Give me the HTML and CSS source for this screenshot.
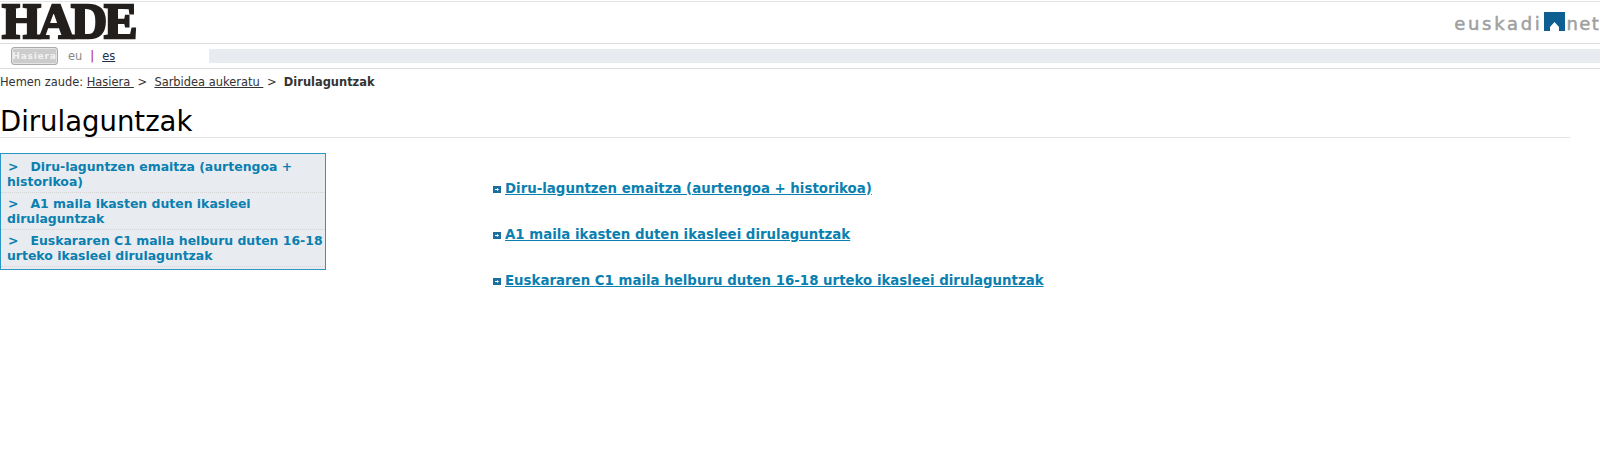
FILE: index.html
```html
<!DOCTYPE html>
<html>
<head>
  <title>Dirulaguntzak</title>
  <link rel="stylesheet" href="styles.css">
</head>
<body>
  <div class="header">
    <div class="logo">HADE</div>
    <div class="euskadi">
      <span>euskadi</span>
      <svg class="euskadi-icon" width="21" height="19" viewBox="0 0 21 19"><path d="M0 0H21V19H15V15L10.500 10L6 15V19H0Z" fill="#0d5f92"/></svg>
      <span class="euskadi-net">net</span>
    </div>
  </div>
  <div class="nav">
    <a class="home-btn" href="#">Hasiera</a>
    <span class="lang">eu</span>
    <span class="lang-sep">|</span>
    <a class="lang-link" href="#">es</a>
    <div class="nav-bar"></div>
  </div>
  <div class="breadcrumb">
    Hemen zaude: <a href="#">Hasiera&nbsp;</a>&nbsp;&gt;&nbsp; <a href="#">Sarbidea aukeratu&nbsp;</a>&nbsp;&gt;&nbsp; <b>Dirulaguntzak</b>
  </div>
  <h1>Dirulaguntzak</h1>
  <div class="main">
    <ul class="side-menu">
      <li><b class="arrow">&gt;</b>Diru-laguntzen emaitza (aurtengoa + historikoa)</li>
      <li><b class="arrow">&gt;</b>A1 maila ikasten duten ikasleei dirulaguntzak</li>
      <li><b class="arrow">&gt;</b>Euskararen C1 maila helburu duten 16-18 urteko ikasleei dirulaguntzak</li>
    </ul>
    <div class="links">
      <div class="link-row">
        <svg class="bullet" width="8" height="7" viewBox="0 0 8 7"><path d="M0 0H8V7H0Z" fill="#1a6f9f"/><path d="M2 3H4V2L6 3.500L4 5V4H2Z" fill="#fff"/></svg>
        <a href="#">Diru-laguntzen emaitza (aurtengoa + historikoa)</a>
      </div>
      <div class="link-row">
        <svg class="bullet" width="8" height="7" viewBox="0 0 8 7"><path d="M0 0H8V7H0Z" fill="#1a6f9f"/><path d="M2 3H4V2L6 3.500L4 5V4H2Z" fill="#fff"/></svg>
        <a href="#">A1 maila ikasten duten ikasleei dirulaguntzak</a>
      </div>
      <div class="link-row">
        <svg class="bullet" width="8" height="7" viewBox="0 0 8 7"><path d="M0 0H8V7H0Z" fill="#1a6f9f"/><path d="M2 3H4V2L6 3.500L4 5V4H2Z" fill="#fff"/></svg>
        <a href="#">Euskararen C1 maila helburu duten 16-18 urteko ikasleei dirulaguntzak</a>
      </div>
    </div>
  </div>
</body>
</html>
```

FILE: styles.css
```css
body {
  margin: 0;
  background-color: #fff;
  font-family: "DejaVu Sans", Verdana, sans-serif;
  font-size: 11.450px;
  color: #333;
}

.header {
  display: flex;
  justify-content: space-between;
  height: 41px;
  border-top: 1px solid #e4e4e4;
  border-bottom: 1px solid #ddd;
  margin-top: 1px;
}

.logo {
  font-family: "Liberation Serif", serif;
  font-weight: bold;
  font-size: 50px;
  line-height: 39px;
  letter-spacing: -3px;
  color: #231f1c;
  -webkit-text-stroke: 2.500px #231f1c;
  padding-left: 2px;
}

.euskadi {
  display: flex;
  align-items: flex-end;
  height: 29px;
  font-size: 18px;
  letter-spacing: 2.700px;
  line-height: 14px;
  color: #a0a0a0;
  -webkit-text-stroke: 0.500px #a0a0a0;
  white-space: nowrap;
}

.euskadi-icon {
  display: block;
  margin: 0 2px 0 1px;
}

.euskadi-net {
  letter-spacing: 1.300px;
}

.nav {
  display: flex;
  align-items: center;
  height: 24px;
  border-bottom: 1px solid #ddd;
  padding-left: 11px;
}

.home-btn {
  box-sizing: border-box;
  width: 47px;
  height: 18px;
  border: 1px solid #aaa;
  border-radius: 3px;
  background-color: #ccc;
  box-shadow: inset 0 0 0 1px #e4e4e4;
  color: #f2f2f2;
  font-size: 9px;
  font-weight: bold;
  line-height: 16px;
  text-align: center;
  letter-spacing: 0.800px;
  text-decoration: none;
}

.lang {
  margin-left: 10px;
  color: #888;
}

.lang-sep {
  margin-left: 8px;
  color: #b5103c;
}

.lang-link {
  margin-left: 8px;
  color: #1d2c4d;
}

.nav-bar {
  flex: 1;
  height: 14px;
  margin-left: 94px;
  background-color: #e8ecf0;
}

.breadcrumb {
  padding-top: 6px;
  line-height: 15px;
  white-space: nowrap;
}

.breadcrumb a {
  color: #333;
}

h1 {
  width: 1570px;
  margin: 15px 0 0;
  border-bottom: 1px solid #e4e4e4;
  font-size: 27.500px;
  font-weight: normal;
  line-height: 32px;
  color: #000;
}

.main {
  display: flex;
  align-items: flex-start;
  margin-top: 15px;
}

.side-menu {
  box-sizing: border-box;
  width: 326px;
  margin: 0;
  padding: 2px 0;
  list-style: none;
  border: 1px solid #2a96c4;
  background-color: #e8ecf0;
  color: #0a7fb0;
  font-size: 12.450px;
  font-weight: bold;
  line-height: 15px;
}

.side-menu li {
  padding: 3px 0 3px 6px;
  border-bottom: 1px dotted #d4d4d4;
}

.arrow {
  margin: 0 12px 0 1px;
}

.links {
  margin-left: 167px;
  padding-top: 26px;
}

.link-row {
  display: flex;
  align-items: center;
  height: 18px;
  margin-bottom: 28px;
  font-size: 13.350px;
  font-weight: bold;
}

.link-row a {
  color: #0a7fb0;
}

.bullet {
  margin: 3px 4px 0 0;
}
```
